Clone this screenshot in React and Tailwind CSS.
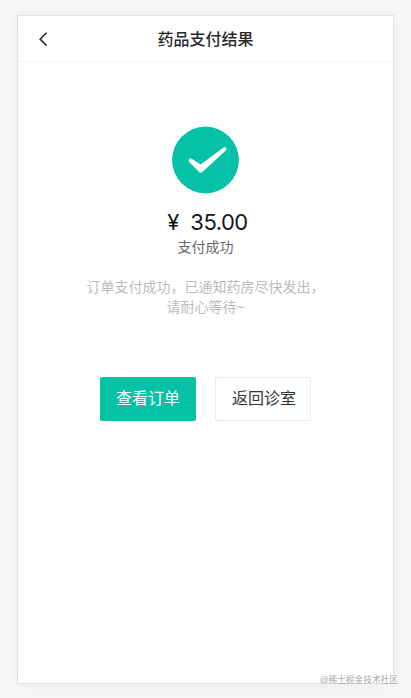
import React from "react";

function SuccessIcon() {
  return (
    <svg className="block h-[68px] w-[68px]" viewBox="0 0 68 68" fill="none">
      <circle cx="33.5" cy="34" r="33.4" fill="#05c1a5" />
      <path
        d="M17.1 36C15.8 34.2 17.6 31.8 19.8 32.8L28.6 38.4L51.6 21.6C53.8 20.4 55.4 22.6 53.8 24.4L30.4 46C29.4 47 28.1 46.9 27.2 46Z"
        fill="#fff"
      />
    </svg>
  );
}

function NavBar({ title }) {
  return (
    <div className="grid h-[46px] grid-cols-[48px_1fr_48px] items-center border-b border-[#f5f5f5]">
      <button className="flex pl-[20px]">
        <svg className="h-4 w-[10px]" viewBox="0 0 10 16" fill="none">
          <path d="M8.6 1.8L2.2 8.2L8.6 14.6" stroke="#26282c" strokeWidth="1.6" />
        </svg>
      </button>
      <h1 className="pt-[2px] text-center text-[16px] font-medium text-[#2a2a2a]">
        {title}
      </h1>
    </div>
  );
}

function App() {
  return (
    <div className="h-[698px] bg-[#f7f7f7] pt-[15px] pl-[17px] font-['Liberation_Sans','Noto_Sans_CJK_SC',sans-serif]">
      <div className="relative h-[669px] w-[377px] border border-[#e2e2e2] bg-white shadow-[0_0_16px_rgba(0,0,0,0.05)]">
        <NavBar title="药品支付结果" />
        <div className="flex flex-col items-center pt-[64px]">
          <SuccessIcon />
          <p className="mt-[14px] flex gap-[11px] pl-[4px] font-['Inter',sans-serif] text-[22px] leading-[28px] text-[#15171a]">
            <span>¥</span>
            <span className="tracking-[-0.5px]">35.00</span>
          </p>
          <p className="mt-px text-[14px] leading-[20px] text-[#686868]">
            支付成功
          </p>
          <p className="mt-[20px] text-center text-[14px] leading-[20px] text-[#bbb]">
            订单支付成功，已通知药房尽快发出，
            <br />
            请耐心等待~
          </p>
        </div>
        <div className="mt-[60px] flex justify-center gap-[19px]">
          <button className="h-[44px] w-[96px] rounded-[2px] bg-[#05c1a5] text-[16px] text-white">
            查看订单
          </button>
          <button className="h-[44px] w-[96px] rounded-[2px] border border-[#ebebeb] bg-white pl-[2px] text-[16px] text-[#333]">
            返回诊室
          </button>
        </div>
        <span className="absolute right-[-5px] bottom-[-4px] text-[8.7px] leading-[14px] whitespace-nowrap text-[#a9a9a9]">
          @稀土掘金技术社区
        </span>
      </div>
    </div>
  );
}

export default App;
